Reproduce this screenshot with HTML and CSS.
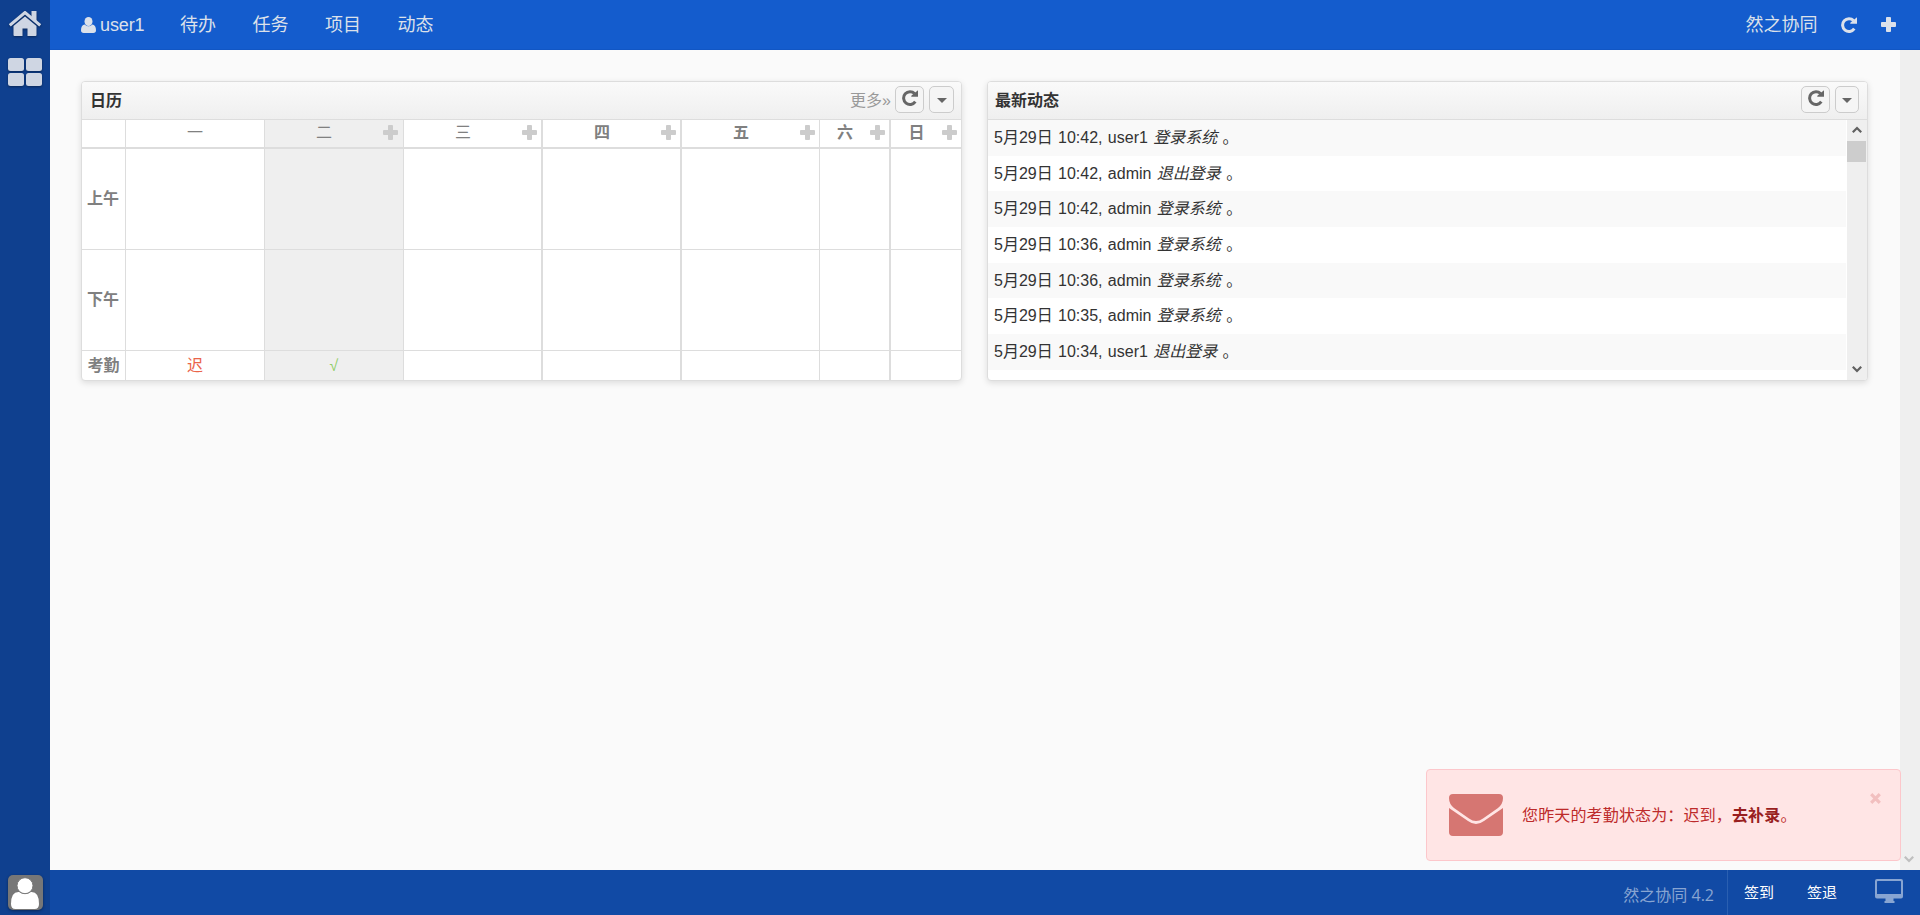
FILE: index.html
```html
<!DOCTYPE html>
<html lang="zh-CN">
<head>
<meta charset="utf-8">
<title>然之协同</title>
<link rel="stylesheet" href="styles.css">
</head>
<body>
<svg width="0" height="0" class="defs">
  <symbol id="refresh" viewBox="0 0 16 16"><path d="M13.300 11.700A6.400 6.400 0 1 1 12.600 3.600" fill="none" stroke="currentColor" stroke-width="3"/><path d="M16 .3V6.800H9.300V5.800Z" fill="currentColor"/></symbol>
  <symbol id="plus" viewBox="0 0 15 15"><path d="M5.900 0h3.200q.9 0 .9.900v4.100h4.100q.9 0 .9.900v3.200q0 .9-.9.900h-4.100v4.100q0 .9-.9.900H5.900q-.9 0-.9-.9v-4.100H.9Q0 10 0 9.100V5.900q0-.9.900-.9H5v-4.100Q5 0 5.900 0Z" fill="currentColor"/></symbol>
  <symbol id="user" viewBox="0 0 15 16"><ellipse cx="7.500" cy="4.500" rx="4" ry="4.500" fill="currentColor"/><path d="M3.700 7.500Q0 8 0 13.300 0 16 2.700 16h9.600Q15 16 15 13.300 15 8 11.300 7.500 7.500 11.200 3.700 7.500Z" fill="currentColor"/></symbol>
  <symbol id="up" viewBox="0 0 10 8"><path d="M.8 6.200 5 2l4.200 4.200" fill="none" stroke="currentColor" stroke-width="2.200"/></symbol>
</svg>
<div class="app">
  <aside class="side">
    <svg class="home" viewBox="0 0 32 26"><path d="M.8 14.400 16 1.500l15.200 12.900" fill="none" stroke="currentColor" stroke-width="3"/><path d="M22.500 0h5v11l-5-4ZM16 5.400 27.500 15V24q0 1-1 1H18.500V17.500h-5V25H5.500q-1 0-1-1V15Z" fill="currentColor"/></svg>
    <svg class="tiles" viewBox="0 0 34 28" fill="currentColor"><rect width="16" height="13" rx="2.500"/><rect x="18" width="16" height="13" rx="2.500"/><rect y="15" width="16" height="13" rx="2.500"/><rect x="18" y="15" width="16" height="13" rx="2.500"/></svg>
    <div class="avatar"><svg viewBox="0 0 35 35"><path d="M3 29Q3 16.500 11 17q6 4 12 0 8-.5 8 12 0 5-4.500 5h-19Q3 34 3 29Z" fill="#fff"/><circle cx="17" cy="10.700" r="8" fill="#fff" stroke="#777" stroke-width="1"/></svg></div>
  </aside>
  <div class="page">
    <nav class="top">
      <span class="me"><svg class="i-user"><use href="#user"/></svg>user1</span><span>待办</span><span>任务</span><span>项目</span><span>动态</span>
      <span class="brand">然之协同</span><svg class="i-refresh nav-refresh"><use href="#refresh"/></svg><svg class="i-plus nav-plus"><use href="#plus"/></svg>
    </nav>
    <div class="workspace">
      <main class="panels">
        <section class="panel">
          <header class="head"><strong>日历</strong><a class="more">更多»</a><button class="btn"><svg class="i-refresh"><use href="#refresh"/></svg></button><button class="btn drop"><i class="caret"></i></button></header>
          <div class="calendar">
            <b></b><b class="past thin"><span>一</span></b><b class="today thin"><span>二</span><svg class="i-plus"><use href="#plus"/></svg></b><b class="thick thin"><span>三</span><svg class="i-plus"><use href="#plus"/></svg></b><b class="thick"><span>四</span><svg class="i-plus"><use href="#plus"/></svg></b><b><span>五</span><svg class="i-plus"><use href="#plus"/></svg></b><b class="thick"><span>六</span><svg class="i-plus"><use href="#plus"/></svg></b><b class="last"><span>日</span><svg class="i-plus"><use href="#plus"/></svg></b>
            <div class="label">上午</div><div></div><div class="today"></div><div class="thick"></div><div class="thick"></div><div></div><div class="thick"></div><div class="last"></div>
            <div class="label">下午</div><div></div><div class="today"></div><div class="thick"></div><div class="thick"></div><div></div><div class="thick"></div><div class="last"></div>
            <div class="label foot">考勤</div><div class="foot late">迟</div><div class="foot today ok">√</div><div class="foot thick"></div><div class="foot thick"></div><div class="foot"></div><div class="foot thick"></div><div class="foot last"></div>
          </div>
        </section>
        <section class="panel news">
          <header class="head"><strong>最新动态</strong><button class="btn first"><svg class="i-refresh"><use href="#refresh"/></svg></button><button class="btn drop"><i class="caret"></i></button></header>
          <div class="feed">
            <ul class="list">
              <li>5月29日 10:42, user1 <em>登录系统</em> 。</li>
              <li>5月29日 10:42, admin <em>退出登录</em> 。</li>
              <li>5月29日 10:42, admin <em>登录系统</em> 。</li>
              <li>5月29日 10:36, admin <em>登录系统</em> 。</li>
              <li>5月29日 10:36, admin <em>登录系统</em> 。</li>
              <li>5月29日 10:35, admin <em>登录系统</em> 。</li>
              <li>5月29日 10:34, user1 <em>退出登录</em> 。</li>
            </ul>
            <div class="scroll"><svg class="arrow"><use href="#up"/></svg><div class="thumb"></div><svg class="arrow down"><use href="#up"/></svg></div>
          </div>
        </section>
      </main>
      <div class="track"><svg class="arrow down"><use href="#up"/></svg></div>
    </div>
    <footer class="bottom"><span class="version">然之协同 4.2</span><span class="actions"><span>签到</span><span>签退</span><svg class="monitor" viewBox="0 0 28 24"><path fill-rule="evenodd" d="M2 0h24q2 0 2 2v15.500q0 2-2 2h-7.500v2.500h1v2H9.500v-2h1v-2.500H2q-2 0-2-2V2Q0 0 2 0Zm.8 2q-.8 0-.8.800V15h24V2.800q0-.8-.8-.8Z" fill="currentColor"/></svg></span></footer>
  </div>
</div>
<div class="alert">
  <svg class="mail" viewBox="0 0 54 42" fill="currentColor"><path d="M4 0h46q4 0 4 4 0 6-5 10L34 24.500q-7 5-14 0L5 14Q0 10 0 4 0 0 4 0Z"/><path d="M0 14 19 27q8 6 16 0L54 14v24q0 4-4 4H4q-4 0-4-4Z"/></svg>
  <p>您昨天的考勤状态为：迟到，<strong>去补录</strong>。</p>
  <svg class="close" viewBox="0 0 11 11"><path d="m1.200 1.200 8.600 8.600m0-8.600L1.200 9.800" stroke="currentColor" stroke-width="3.200"/></svg>
</div>
</body>
</html>
```
FILE: styles.css
```css
* { box-sizing: border-box; }
body { margin: 0; height: 915px; overflow: hidden; font: 16px/1.2 "Liberation Sans", "Noto Sans CJK SC", sans-serif; color: #333; background: #fafafa; }
svg { display: block; flex: none; }
.defs { position: absolute; }
.app { display: flex; height: 915px; }
.side { width: 50px; background: #0f408f; color: #cfd6e3; display: flex; flex-direction: column; align-items: center; padding: 11px 0 5px; }
.side svg { filter: drop-shadow(0 1px 1px rgba(0, 0, 0, .4)); }
.home { width: 32px; height: 26px; }
.tiles { width: 34px; height: 28px; margin-top: 21px; }
.avatar { width: 35px; height: 35px; margin: auto 0 0 1px; background: #777; border-radius: 5px; overflow: hidden; box-shadow: 0 1px 3px rgba(0, 0, 0, .4); }
.avatar svg { filter: none; }
.page { flex: 1; display: flex; flex-direction: column; }
.top { height: 50px; background: #145ccd; color: #dce1ea; display: flex; align-items: center; gap: 36.500px; padding: 0 24px 0 31px; font-size: 18px; border-bottom: 1px solid #1156c4; }
.top > span { margin-top: 2px; }
.me { display: flex; align-items: center; gap: 4px; margin-right: -1px; letter-spacing: -.1px; }
.i-user { width: 15px; height: 16px; margin-top: -1px; }
.i-refresh { width: 16px; height: 16px; }
.i-plus { width: 15px; height: 15px; }
.brand { margin-left: auto; }
.nav-refresh { margin-left: -13px; }
.nav-plus { margin-left: -12.500px; margin-top: -1px; }
.workspace { height: 820px; display: flex; }
.panels { flex: 1; display: flex; gap: 25px; align-items: flex-start; padding: 31px 31px 0; }
.panel { width: 881px; height: 300px; border: 1px solid #ddd; border-radius: 4px; overflow: hidden; background: #fff; box-shadow: 0 2px 6px rgba(0, 0, 0, .12); }
.head { height: 38px; display: flex; align-items: center; padding: 0 7px 2px 8px; border-bottom: 1px solid #ddd; background: linear-gradient(#fafafa, #efefef); }
.head strong { margin-top: 2px; }
.news .head { padding-left: 7px; padding-right: 8px; }
.more { margin-left: auto; margin-right: 4px; margin-top: 2px; color: #999; }
.btn { width: 29px; height: 27px; padding: 0 0 3px; border: 1px solid #ccc; border-radius: 5px; background: #f5f5f5; color: #666; display: flex; align-items: center; justify-content: center; }
.first { margin-left: auto; }
.drop { width: 25px; margin-left: 5px; padding: 2px 0 0; }
.news .drop { width: 24px; }
.caret { border: 5px solid transparent; border-top-color: #666; border-bottom: 0; }
.calendar { display: grid; grid-template: 29px 101px 101px 29px / 44px 139px 139px 139px 139px 138px 71px 70px; color: #808080; }
.calendar > * { display: flex; align-items: center; justify-content: center; border: solid #ddd; border-width: 0 1px 1px 0; }
.calendar > b { border-bottom-width: 2px; padding: 0 4px 2px 0; }
.calendar > .past { padding-right: 0; }
.calendar > .today { padding-right: 5px; }
.calendar > .thin { font-weight: normal; }
.calendar > b span { flex: 1; text-align: center; }
.calendar b .i-plus { color: #ccc; }
.calendar > .thick { border-right-width: 2px; }
.calendar > .last { border-right: 0; }
.calendar > .foot { border-bottom: 0; padding: 0; }
.calendar .today { background: #efefef; }
.label { font-weight: bold; padding-right: 1px; }
.calendar .late { color: #ea644a; }
.calendar .ok { color: #8fce68; }
.feed { display: flex; height: 260px; }
.list { flex: 1; list-style: none; margin: 0 1px 0 0; padding: 0; word-spacing: .9px; }
.list li { height: 35.700px; line-height: 35px; padding-left: 6px; white-space: pre; }
.list li:nth-child(odd) { background: #f9f9f9; }
.scroll { width: 20px; padding-right: 1px; background: #efefef; color: #606060; display: flex; flex-direction: column; align-items: center; }
.scroll .arrow { margin-top: 6px; }
.arrow { width: 10px; height: 8px; }
.thumb { width: 19px; height: 21px; margin-top: 7px; background: #cdcdcd; }
.arrow.down { transform: rotate(180deg); margin: auto 0 7px; }
.track { width: 20px; padding-right: 2px; background: #efefef; color: #bfbfbf; display: flex; flex-direction: column; align-items: center; }
.bottom { height: 45px; background: #114aa5; display: flex; justify-content: flex-end; }
.version { padding: 15px 13px 0 0; line-height: 20px; color: #88a5d2; font-family: "Open Sans", "Noto Sans CJK SC", sans-serif; }
.actions { width: 193px; border-left: 1px solid #2a5fb1; display: flex; align-items: center; padding: 0 17px 0 16px; font-size: 15px; color: #fff; gap: 33px; }
.monitor { width: 28px; height: 24px; color: #88a5d2; margin: 0 0 3px auto; }
.alert { position: fixed; left: 1426px; top: 769px; width: 475px; height: 92px; display: flex; align-items: center; padding: 0 19px 0 22px; background: #ffe5e5; border: 1px solid #fcc7cb; border-radius: 4px; color: #bd2b2b; }
.mail { width: 54px; height: 42px; color: #d67672; }
.alert p { margin: 2px 0 0 19px; letter-spacing: .15px; }
.alert strong { color: #991f1f; }
.close { width: 11px; height: 11px; margin: 0 0 33px auto; color: #f2bfbf; }
```
